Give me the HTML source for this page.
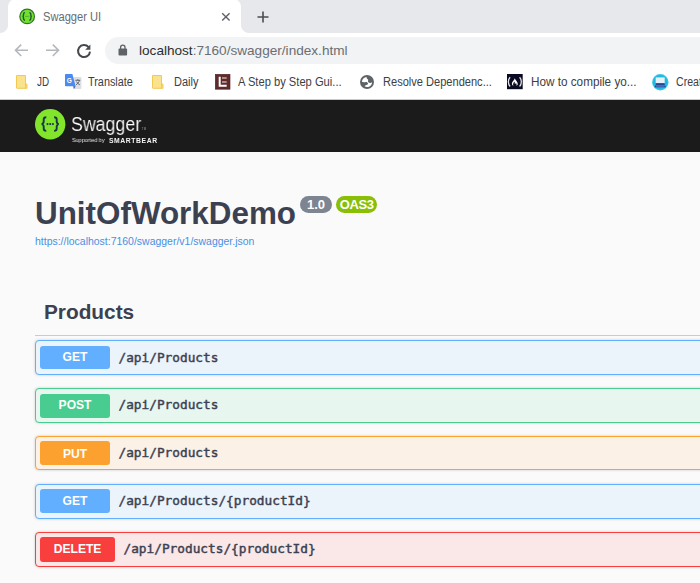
<!DOCTYPE html>
<html><head><meta charset="utf-8"><title>Swagger UI</title>
<style>
html,body{margin:0;padding:0;}
body{width:700px;height:583px;overflow:hidden;background:#fafafa;font-family:"Liberation Sans",sans-serif;position:relative;}
.abs{position:absolute;}
svg{position:absolute;overflow:visible;}
#tabstrip{left:0;top:0;width:700px;height:33px;background:#e7e8ec;}
#tab{left:8px;top:-1px;width:233px;height:34px;background:#fff;border-radius:8px 8px 0 0;}
#tabl{left:0;top:25px;width:8px;height:8px;background:radial-gradient(circle at 0 0,#e7e8ec 7.5px,#fff 8.5px);}
#tabr{left:241px;top:25px;width:8px;height:8px;background:radial-gradient(circle at 100% 0,#e7e8ec 7.5px,#fff 8.5px);}
#tabtitle{left:43px;top:9.5px;font-size:12px;color:#676b70;white-space:nowrap;transform:scaleX(.927);transform-origin:0 0;}
#toolbar{left:0;top:33px;width:700px;height:33px;background:#fff;}
#omni{left:105px;top:37px;width:620px;height:27px;border-radius:14px;background:#f1f3f4;}
#url{left:139px;top:43.4px;font-size:13.6px;color:#2a2d31;white-space:nowrap;}
#url span{color:#6a6e73;}
#bm{left:0;top:66px;width:700px;height:32.500px;background:#fff;border-bottom:1px solid #c8cace;}
.bmt{top:75px;font-size:12px;color:#3c4043;white-space:nowrap;transform-origin:0 0;}
#topbar{left:0;top:99.5px;width:700px;height:52.5px;background:#1b1b1b;}
#swt{left:71.300px;top:112.500px;font-size:19.700px;color:#fff;white-space:nowrap;transform:scaleX(.902);transform-origin:0 0;-webkit-text-stroke:.14px #1b1b1b;will-change:transform;}
#sup{left:71.800px;top:137.200px;font-size:6px;color:#e4e4e4;white-space:nowrap;transform:scaleX(.915);transform-origin:0 0;will-change:transform;}
#sb{left:108.900px;top:136.800px;font-size:6.800px;font-weight:bold;letter-spacing:.58px;will-change:transform;color:#f4f4f4;white-space:nowrap;}
#h1{left:35px;top:196.400px;font-size:31.400px;font-weight:bold;color:#3b4151;white-space:nowrap;}
.badge{top:196.100px;height:17.300px;border-radius:9px;color:#fff;font-weight:bold;font-size:13px;line-height:17.300px;text-align:center;white-space:nowrap;}
#link{left:35px;top:236px;font-size:10.48px;color:#4990e2;white-space:nowrap;}
#prod{left:44px;top:300px;font-size:20.8px;font-weight:bold;color:#3b4151;}
#hr{left:35px;top:335px;width:665px;height:1px;background:rgba(59,65,81,.25);}
.op{left:35px;width:680px;height:var(--h);border:.9px solid;border-radius:4px;box-shadow:0 0 3px rgba(0,0,0,.19);}
.m{position:absolute;left:4.300px;top:var(--bt);width:69.500px;height:var(--bh);border-radius:3px;color:#fff;font-weight:bold;font-size:12.100px;line-height:calc(var(--bh) - 1.2px);text-align:center;}
.m span{display:inline-block;transform:translateY(var(--dy)) scaleY(1.09);}
.p{position:absolute;left:82.500px;top:8.300px;font-family:"DejaVu Sans Mono","Liberation Mono",monospace;font-weight:normal;-webkit-text-stroke:.45px #3b4151;font-size:12.770px;color:#3b4151;white-space:nowrap;}
.get{border-color:#61affe;background:#ebf3fb;} .get .m{background:#61affe;}
.post{border-color:#49cc90;background:#e8f6f0;} .post .m{background:#49cc90;}
.put{border-color:#fca130;background:#fbf1e6;} .put .m{background:#fca130;}
.del{border-color:#f93e3e;background:#fae7e7;} .del .m{background:#f93e3e;width:74.500px;} .del .p{left:87.500px;}
</style></head><body>
<div id="tabstrip" class="abs"></div>
<div id="tab" class="abs"></div><div id="tabl" class="abs"></div><div id="tabr" class="abs"></div>
<div id="tabtitle" class="abs">Swagger UI</div>
<div id="toolbar" class="abs"></div>
<div id="omni" class="abs"></div>
<div id="url" class="abs">localhost<span>:7160/swagger/index.html</span></div>

<!-- favicon -->
<svg style="left:19px;top:8px" width="16" height="17" viewBox="19 8 16 17"><circle cx="27.15" cy="16.4" r="7.3" fill="#72e02c" stroke="#33752a" stroke-width="1.2"/><path d="M25 12.6c-1.2 0-1.5.5-1.5 1.4v1.2c0 .7-.3 1.1-1 1.2.7.1 1 .5 1 1.2v1.2c0 .9.3 1.4 1.5 1.4M29.3 12.6c1.2 0 1.5.5 1.5 1.4v1.2c0 .7.3 1.1 1 1.2-.7.1-1 .5-1 1.2v1.2c0 .9-.3 1.4-1.5 1.4" fill="none" stroke="#1c5535" stroke-width="1.350"/><path d="M25 16.4h4.3" stroke="#4fae35" stroke-width=".9"/></svg>
<!-- tab close -->
<svg style="left:218px;top:9px" width="16" height="16" viewBox="0 0 16 16"><path d="M4.2 4.2l7.4 7.4M11.6 4.2l-7.4 7.4" stroke="#5f6368" stroke-width="1.4" fill="none"/></svg>
<!-- new tab plus -->
<svg style="left:254px;top:8px" width="18" height="18" viewBox="0 0 18 18"><path d="M9 3.5v11M3.5 9h11" stroke="#4a4d51" stroke-width="1.6" fill="none"/></svg>
<!-- back -->
<svg style="left:14px;top:43px" width="15" height="15" viewBox="0 0 15 15"><path d="M14 7.3H1.8M7.2 1.6L1.5 7.3l5.7 5.7" stroke="#b4b7bb" stroke-width="1.6" fill="none"/></svg>
<!-- forward -->
<svg style="left:45px;top:43px" width="15" height="15" viewBox="0 0 15 15"><path d="M1 7.3h12.2M7.8 1.6l5.7 5.7-5.7 5.7" stroke="#b4b7bb" stroke-width="1.6" fill="none"/></svg>
<!-- reload -->
<svg style="left:76px;top:43px" width="16" height="16" viewBox="0 0 16 16"><path d="M12.6 4.2A6 6 0 1 0 14 8.6" stroke="#45484c" stroke-width="2" fill="none"/><path d="M14.4 1.6v5.2H9.2z" fill="#4a4d51"/></svg>
<!-- lock -->
<svg style="left:118px;top:44px" width="10" height="12" viewBox="0 0 10 12"><rect x=".5" y="4.6" width="8.6" height="7" rx="1" fill="#5f6368"/><path d="M2.6 5V3.4a2.2 2.2 0 0 1 4.4 0V5" stroke="#5f6368" stroke-width="1.3" fill="none"/></svg>
<div id="bm" class="abs"></div>
<div class="abs bmt" style="left:36.8px;transform:scaleX(.82)">JD</div>
<div class="abs bmt" style="left:88.400px;transform:scaleX(.905)">Translate</div>
<div class="abs bmt" style="left:173.600px;transform:scaleX(.915)">Daily</div>
<div class="abs bmt" style="left:237.800px;transform:scaleX(.93)">A Step by Step Gui...</div>
<div class="abs bmt" style="left:382.500px;transform:scaleX(.922)">Resolve Dependenc...</div>
<div class="abs bmt" style="left:531.200px;transform:scaleX(.977)">How to compile yo...</div>
<div class="abs bmt" style="left:675.600px;transform:scaleX(.88)">Create</div>
<svg style="left:16.100px;top:74.700px" width="12" height="14" viewBox="0 0 12 14"><path d="M.9.500h8.200a.4.400 0 0 1 .4.400v8.200h1.500v4.200H.9a.4.400 0 0 1-.4-.4V.9a.4.400 0 0 1 .4-.4z" fill="#fbe38e" stroke="#f0c445" stroke-width=".9"/><path d="M9.500 13.300V9.100" fill="none" stroke="#f0c445" stroke-width=".9"/></svg><svg style="left:152.100px;top:74.700px" width="12" height="14" viewBox="0 0 12 14"><path d="M.9.500h8.200a.4.400 0 0 1 .4.400v8.200h1.500v4.200H.9a.4.400 0 0 1-.4-.4V.9a.4.400 0 0 1 .4-.4z" fill="#fbe38e" stroke="#f0c445" stroke-width=".9"/><path d="M9.500 13.300V9.100" fill="none" stroke="#f0c445" stroke-width=".9"/></svg>
<!-- translate -->
<svg style="left:65px;top:74px" width="17" height="16" viewBox="0 0 17 16"><rect x="8" y="3" width="8.4" height="12" rx=".8" fill="#dcdfe3"/><path d="M.8 0h6.6l3.2 12.3H.8a.8.8 0 0 1-.8-.8V.8A.8.8 0 0 1 .8 0z" fill="#4a8af4"/><path d="M8.2 12.3h2.4l-1.6 2.6z" fill="#3a5bb5"/><text x="1.7" y="8.6" font-family="Liberation Sans,sans-serif" font-size="6.5" font-weight="bold" fill="#fff">G</text><path d="M10.3 6.3h5M12.8 5.2v1.1M11 10.8c2-1.3 3-2.700 3.400-4.500M11.500 7.600c.8 1.500 1.800 2.500 3.300 3.200" stroke="#4a4f57" stroke-width=".8" fill="none"/></svg>
<!-- brown E -->
<svg style="left:215px;top:73.900px" width="16" height="16" viewBox="0 0 16 16"><rect x=".3" y=".3" width="14.700" height="14.900" fill="#5f2b2b" stroke="#4d2020" stroke-width=".6"/><path d="M4.700 2.700v9h7" stroke="#fff" stroke-width="2" fill="none"/><path d="M7 4h4.700M7 7.900h4.700" stroke="#c9adac" stroke-width="1.500" fill="none"/></svg>
<!-- globe -->
<svg style="left:359.900px;top:74.900px" width="14" height="14" viewBox="0 0 13.5 13.5"><circle cx="6.750" cy="6.750" r="6.750" fill="#5f6368"/><path transform="translate(6.75 6.75) scale(.92) translate(-6.75 -6.75)" d="M6.300 1.500C3.700 1.700 1.600 3.700 1.400 6.500c1.300.5 2.600.6 4 .2 1.200-.3 2 .4 2.300 1.400.3 1.100-.4 1.700-1.600 1.900-.9.200-1.600.6-1.900 1.200.8.500 1.700.800 2.700.800 2.800 0 5.100-2.200 5.200-5-1 .8-2 1-3 .6-1-.4-1.500-1.200-1.200-2.200.2-.800-.1-1.300-.7-1.700-.6-.4-.9-1-.9-2.200z" fill="#fff"/></svg>
<!-- freecodecamp -->
<svg style="left:507.300px;top:73.900px" width="16" height="16" viewBox="0 0 16 16"><rect width="15.700" height="15.200" fill="#0a0a23"/><path d="M3.100 3.200c-2.300 2.300-2.300 7 0 9.300M12.600 3.200c2.300 2.300 2.300 7 0 9.300" stroke="#e4e4ea" stroke-width="1.300" fill="none"/><path d="M7.800 4.200c.4 1.500 2.600 3.200 2.900 5.200.2 1.300-.5 2.100-1.300 2.300.4-.9.200-1.800-.5-2.600-.3.700-.7.900-1.100.8.200-.8 0-1.600-.6-2.300-.2 1.100-1.200 2-1.100 3.200 0 .4.200.7.500 1-1.100-.3-1.800-1.200-1.700-2.500.2-2 2.700-3.300 2.900-5.100z" fill="#fff"/></svg>
<!-- cyan computer -->
<svg style="left:651.900px;top:73.500px" width="17" height="17" viewBox="0 0 17 17"><circle cx="8.300" cy="8.200" r="8.200" fill="#3cc6e6"/><circle cx="8.300" cy="8.200" r="7.300" fill="#22b9e0"/><rect x="3.700" y="3.400" width="9" height="6" fill="#e8f1f8"/><rect x="3.700" y="9.200" width="9" height="1.700" fill="#1f3f96"/><path d="M3.200 11.500h10l.7 1.700H2.500z" fill="#1f3f96"/><path d="M4 12.300h8.600" stroke="#7fa0d8" stroke-width=".5"/></svg>
<div id="topbar" class="abs"></div>

<svg style="left:34.8px;top:108.700px" width="31" height="31" viewBox="0 0 31 31"><circle cx="15.200" cy="15.200" r="15.200" fill="#82e52c"/><path d="M11.300 8.300c-2.100 0-2.600.8-2.600 2.300v2c0 1.400-.6 2.200-2 2.500 1.400.3 2 1.100 2 2.500v2c0 1.500.5 2.300 2.600 2.300M19.100 8.300c2.100 0 2.600.8 2.600 2.300v2c0 1.400.6 2.200 2 2.500-1.400.3-2 1.100-2 2.500v2c0 1.500-.5 2.300-2.600 2.300" fill="none" stroke="#173647" stroke-width="1.900"/><circle cx="12.500" cy="15.100" r="1.050" fill="#173647"/><circle cx="15.200" cy="15.100" r="1.050" fill="#173647"/><circle cx="17.900" cy="15.100" r="1.050" fill="#173647"/></svg>
<div id="swt" class="abs">Swagger</div>
<div class="abs" style="left:141.800px;top:127.400px;font-size:2.800px;color:#999;letter-spacing:.2px">TM</div><div id="sup" class="abs">Supported by</div>
<div id="sb" class="abs">SMARTBEAR</div>
<div id="h1" class="abs">UnitOfWorkDemo</div>
<div class="abs badge" style="left:300.400px;width:31.300px;background:#7d8492">1.0</div>
<div class="abs badge" style="left:336.400px;width:40.500px;background:#89bf04;letter-spacing:-.35px">OAS3</div>
<div id="link" class="abs">https://localhost:7160/swagger/v1/swagger.json</div>
<div id="prod" class="abs">Products</div>
<div id="hr" class="abs"></div>
<div class="abs op get" style="top:340.300px;--h:32.600px;--bt:4.800px;--bh:22.900px"><div class="m"><span style="--dy:1px">GET</span></div><div class="p">/api/Products</div></div>
<div class="abs op post" style="top:387.800px;--h:33.000px;--bt:4.900px;--bh:24.200px"><div class="m"><span style="--dy:-.45px">POST</span></div><div class="p">/api/Products</div></div>
<div class="abs op put" style="top:435.800px;--h:32.500px;--bt:4.400px;--bh:23.900px"><div class="m"><span style="--dy:1.650px">PUT</span></div><div class="p">/api/Products</div></div>
<div class="abs op get" style="top:483.700px;--h:33.200px;--bt:4.300px;--bh:24.000px"><div class="m"><span style="--dy:1px">GET</span></div><div class="p">/api/Products/{productId}</div></div>
<div class="abs op del" style="top:531.500px;--h:33.300px;--bt:4.700px;--bh:24.700px"><div class="m"><span style="--dy:.5px">DELETE</span></div><div class="p">/api/Products/{productId}</div></div>
</body></html>
